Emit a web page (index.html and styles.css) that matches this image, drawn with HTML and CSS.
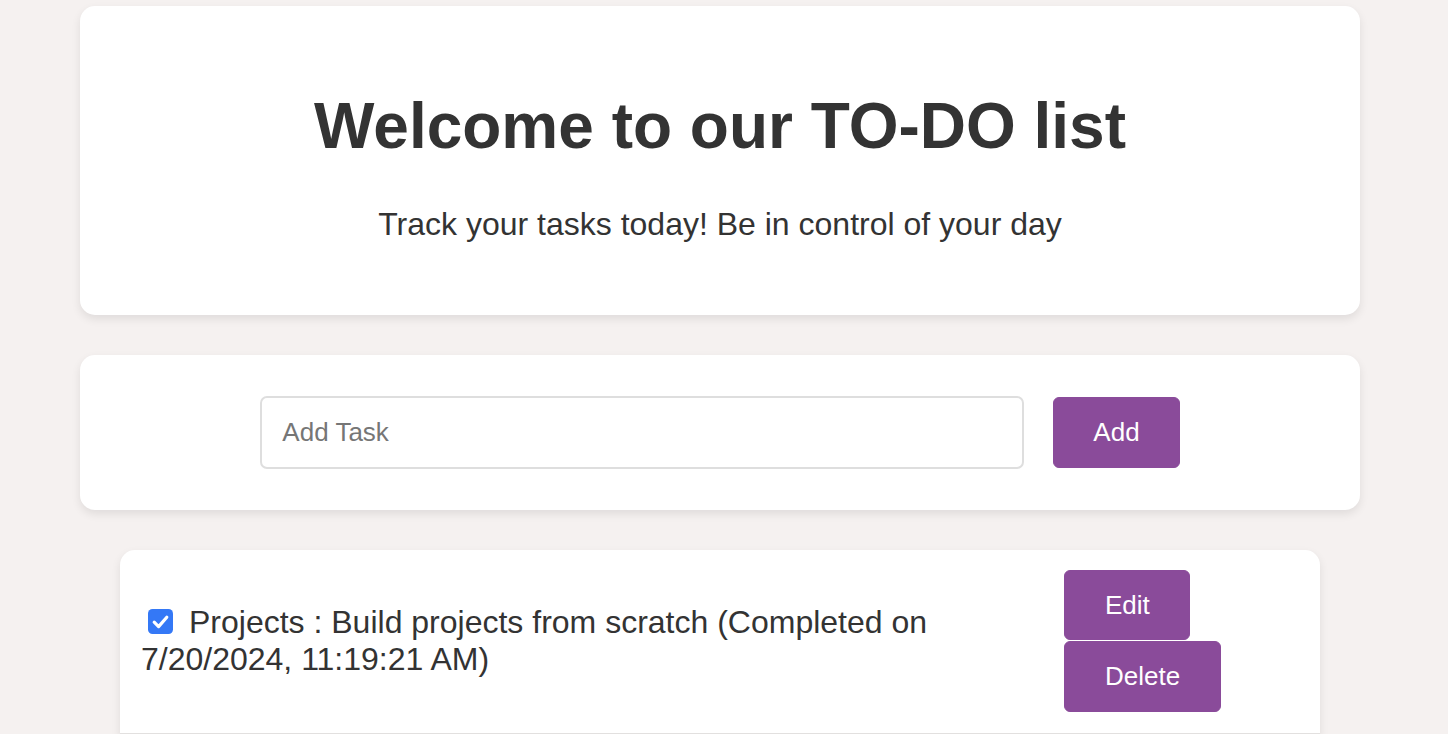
FILE: index.html
```html
<!DOCTYPE html>
<html lang="en">
<head>
<meta charset="utf-8">
<title>TO-DO list</title>
<link rel="stylesheet" href="styles.css">
</head>
<body>
<main class="container">
  <section class="card header-card">
    <h1 class="title">Welcome to our TO-DO list</h1>
    <p class="subtitle">Track your tasks today! Be in control of your day</p>
  </section>

  <section class="card input-card">
    <input class="task-input" type="text" placeholder="Add Task">
    <button class="btn add-btn">Add</button>
  </section>

  <ul class="task-list">
    <li class="task-item">
      <div class="task-text"><span class="checkbox" role="checkbox" aria-checked="true"><svg viewBox="0 0 25 25" width="25" height="25"><rect x="0" y="0" width="25" height="25" rx="4.5" fill="#3478f6"/><path d="M6.2 13.2 L10.6 17.6 L18.8 8.2" fill="none" stroke="#fff" stroke-width="3.2" stroke-linecap="round" stroke-linejoin="round"/></svg></span>Projects : Build projects from scratch (Completed on 7/20/2024, 11:19:21 AM)</div>
      <div class="task-actions">
        <button class="btn edit-btn">Edit</button>
        <button class="btn">Delete</button>
      </div>
    </li>
  </ul>
</main>
</body>
</html>
```

FILE: styles.css
```css
html, body {
  margin: 0;
  padding: 0;
}

body {
  background: #f5f1f0;
  font-family: "Liberation Sans", Arial, Helvetica, sans-serif;
  color: #333;
}

.container {
  width: 1280px;
  margin-left: 80px;
  padding-top: 6px;
}

.card {
  background: #fff;
  border-radius: 15px;
  box-shadow: 0 4px 10px rgba(0, 0, 0, 0.09);
}

.header-card {
  padding: 40px;
  text-align: center;
}

.title {
  font-size: 64px;
  font-weight: bold;
  margin: 0.67em 0;
}

.subtitle {
  font-size: 32px;
  margin: 32px 0;
}

.input-card {
  margin-top: 40px;
  padding: 41px 40px 41px;
  display: flex;
  justify-content: center;
  align-items: center;
  gap: 29px;
}

.task-input {
  box-sizing: border-box;
  width: 764px;
  height: 73px;
  padding: 0 20px;
  border: 2px solid #dedede;
  border-radius: 7px;
  font-family: "Liberation Sans", Arial, sans-serif;
  font-size: 26px;
  color: #333;
  outline: none;
}

.task-input::placeholder {
  color: #767676;
}

.btn {
  background: #8a4b9a;
  color: #fff;
  border: 1px solid #8a4b9a;
  border-radius: 6px;
  font-family: "Liberation Sans", Arial, sans-serif;
  font-size: 26px;
  line-height: 28px;
  padding: 20px 40px;
  cursor: pointer;
}

.add-btn {
  height: 71px;
  padding: 20px 39px;
}

.task-list {
  list-style: none;
  margin: 40px 0 0;
  padding: 0 40px;
}

.task-item {
  background: #fff;
  border-radius: 15px 15px 0 0;
  box-shadow: 0 4px 10px rgba(0, 0, 0, 0.09);
  padding: 20px 20px 21px 21px;
  display: flex;
  align-items: center;
  border-bottom: 2px solid #e2e0df;
}

.task-text {
  flex: 1;
  font-size: 32px;
  line-height: 37px;
  padding-right: 20px;
  padding-top: 1px;
}

.checkbox {
  display: inline-block;
  width: 25px;
  height: 25px;
  margin: 0 16px 0 7px;
  vertical-align: -1px;
}

.checkbox svg {
  display: block;
}

.task-actions {
  width: 236px;
  display: flex;
  flex-direction: column;
  align-items: flex-start;
  gap: 1px;
}

.task-actions .btn {
  height: 71px;
}

.task-actions .edit-btn {
  height: 70px;
  padding: 20px 39px 20px 40px;
}
```
